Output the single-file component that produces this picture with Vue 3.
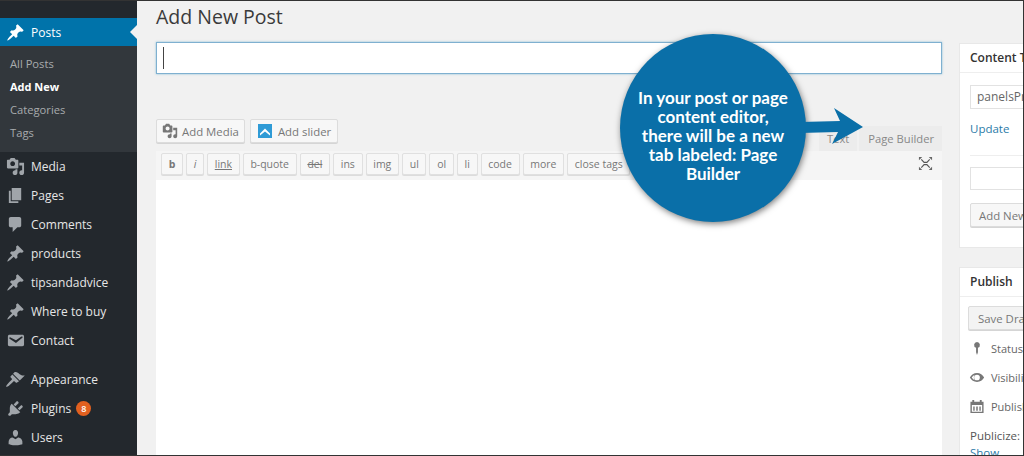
<script setup>
const subItems = [
  { label: 'All Posts' },
  { label: 'Add New', current: true },
  { label: 'Categories' },
  { label: 'Tags' },
]
const menuTop = [
  { label: 'Media', icon: 'media' },
  { label: 'Pages', icon: 'pages' },
  { label: 'Comments', icon: 'comment' },
  { label: 'products', icon: 'pin' },
  { label: 'tipsandadvice', icon: 'pin' },
  { label: 'Where to buy', icon: 'pin' },
  { label: 'Contact', icon: 'mail' },
]
const menuBottom = [
  { label: 'Appearance', icon: 'brush' },
  { label: 'Plugins', icon: 'plug', badge: '8' },
  { label: 'Users', icon: 'user' },
]
const quicktags = [
  { label: 'b', cls: 'bold' },
  { label: 'i', cls: 'ital' },
  { label: 'link', cls: 'under' },
  { label: 'b-quote' },
  { label: 'del', cls: 'strike' },
  { label: 'ins' },
  { label: 'img' },
  { label: 'ul' },
  { label: 'ol' },
  { label: 'li' },
  { label: 'code' },
  { label: 'more' },
  { label: 'close tags' },
]
const paths = {
  pin: 'M10.44 3.02l1.82-1.82 6.36 6.35-1.83 1.82c-1.05-.68-2.48-.57-3.41.36l-.75.75c-.92.93-1.04 2.35-.35 3.41l-1.83 1.82-2.41-2.41-2.8 2.79c-.42.42-3.38 2.71-3.8 2.29s1.86-3.39 2.28-3.81l2.79-2.79L4.1 9.36l1.83-1.82c1.05.69 2.48.57 3.4-.36l.75-.75c.93-.92 1.05-2.35.36-3.41z',
  media: 'M13 11V4c0-.55-.45-1-1-1h-1.67L9 1H5L3.67 3H2c-.55 0-1 .45-1 1v7c0 .55.45 1 1 1h10c.55 0 1-.45 1-1zM7 4.5c1.38 0 2.5 1.12 2.5 2.5S8.38 9.5 7 9.5 4.5 8.38 4.5 7 5.62 4.5 7 4.5zM14 6h5v10.5c0 1.38-1.12 2.5-2.5 2.5S14 17.88 14 16.5s1.12-2.5 2.5-2.5c.17 0 .34.02.5.05V9h-3V6zm-4 8.05V13h2v3.5c0 1.38-1.12 2.5-2.5 2.5S7 17.88 7 16.5 8.12 14 9.5 14c.17 0 .34.02.5.05z',
  pages: 'M6 15V2h10v13H6zm-1 1h8v2H3V5h2v11z',
  comment: 'M5 2h9c1.1 0 2 .9 2 2v7c0 1.1-.9 2-2 2h-2l-5 5v-5H5c-1.1 0-2-.9-2-2V4c0-1.1.9-2 2-2z',
  mail: 'M3.87 4h13.25C18.37 4 19 4.59 19 5.79v8.42c0 1.19-.63 1.79-1.88 1.79H3.87c-1.25 0-1.88-.6-1.88-1.79V5.79c0-1.2.63-1.79 1.88-1.79zm6.62 8.6l6.74-5.53c.24-.2.43-.66.13-1.07-.29-.41-.82-.42-1.17-.17l-5.7 3.86L4.8 6.83c-.35-.25-.88-.24-1.17.17-.3.41-.11.87.13 1.07z',
  brush: 'M14.48 11.06L7.41 3.99l1.5-1.5c.5-.56 2.3-.47 3.51.32 1.21.8 1.43 1.28 2.91 2.1 1.18.64 2.45 1.26 4.45.85zm-.71.71L6.7 4.7 4.93 6.47c-.39.39-.39 1.02 0 1.41l1.06 1.06c.39.39.39 1.03 0 1.42-.6.6-1.43 1.31-2.21 2.09-2.36 2.36-4.04 4.62-3.39 5.28.66.65 2.92-1.03 5.28-3.39.78-.78 1.49-1.61 2.09-2.21.39-.39 1.03-.39 1.42 0l1.06 1.06c.39.39 1.02.39 1.41 0z',
  plug: 'M13.11 4.36L9.87 7.6 8 5.73l3.24-3.24c.35-.34 1.05-.2 1.56.32.52.51.66 1.21.31 1.55zm-8 1.77l.91-1.12 9.01 9.01-1.19.84c-.71.71-2.63 1.16-3.82 1.16H6.14L4.9 17.26c-.59.59-1.54.59-2.12 0-.59-.58-.59-1.53 0-2.12l1.24-1.24v-3.88c0-1.13.4-3.05 1.09-3.89zm7.26 3.97l3.24-3.24c.34-.35 1.04-.21 1.55.31.52.51.66 1.21.31 1.55l-3.24 3.25z',
  user: 'M10 9.25c-2.27 0-2.73-3.44-2.73-3.44C7 4.02 7.82 2 9.97 2c2.16 0 2.98 2.02 2.71 3.81 0 0-.41 3.44-2.68 3.44zm0 2.57L12.72 10c2.39 0 4.52 2.33 4.52 4.53v2.49s-3.65 1.13-7.24 1.13c-3.65 0-7.24-1.13-7.24-1.13v-2.49c0-2.25 1.94-4.48 4.15-4.48z',
}
</script>

<template>
  <div class="screen">
    <aside class="sidebar">
      <div class="current-item">
        <svg class="menu-icon" viewBox="0 0 20 20"><path :d="paths.pin" /></svg>
        <span>Posts</span>
      </div>
      <ul class="submenu">
        <li v-for="item in subItems" :key="item.label" :class="{ active: item.current }">{{ item.label }}</li>
      </ul>
      <ul class="menu">
        <li v-for="item in menuTop" :key="item.label">
          <svg class="menu-icon" viewBox="0 0 20 20"><path :d="paths[item.icon]" fill-rule="evenodd" /></svg>
          <span>{{ item.label }}</span>
        </li>
      </ul>
      <ul class="menu second">
        <li v-for="item in menuBottom" :key="item.label">
          <svg class="menu-icon" viewBox="0 0 20 20"><path :d="paths[item.icon]" fill-rule="evenodd" /></svg>
          <span>{{ item.label }}</span>
          <b v-if="item.badge" class="badge">{{ item.badge }}</b>
        </li>
      </ul>
    </aside>

    <main class="content">
      <div class="editor-col">
        <h1>Add New Post</h1>
        <div class="title-input"><i class="caret"></i></div>
        <div class="media-row">
          <div class="media-buttons">
            <button class="btn media-btn">
              <svg class="btn-icon" viewBox="0 0 20 20"><path :d="paths.media" fill-rule="evenodd" /></svg>
              Add Media
            </button>
            <button class="btn slider-btn">
              <svg class="slider-icon" viewBox="0 0 14 14">
                <rect width="14" height="14" fill="#2f9bd6" />
                <path d="M2 9.5L7 4.5l5 5v2L7 7.5l-5 4z" fill="#fff" />
              </svg>
              Add slider
            </button>
          </div>
          <div class="tabs">
            <span class="tab">Text</span>
            <span class="tab active">Page Builder</span>
          </div>
        </div>
        <div class="toolbar">
          <span v-for="tag in quicktags" :key="tag.label" class="tag" :class="tag.cls">{{ tag.label }}</span>
          <svg class="expand" viewBox="0 0 16 16">
            <path class="expand-lines" d="M3.500 3.500L6.500 6.800H9.500L12.500 3.500M3.500 12.500L6.500 9.200H9.500L12.500 12.500" />
            <path d="M1 1h3.500L1 4.500zM15 1v3.500L11.500 1zM1 15v-3.500L4.500 15zM15 15h-3.500L15 11.500z" />
          </svg>
        </div>
        <div class="editor-area"></div>
      </div>

      <div class="side-col">
        <section class="panel tags-panel">
          <h2>Content T</h2>
          <div class="panel-body">
            <div class="field">panelsPr</div>
            <a class="update">Update</a>
            <hr />
            <div class="field empty"></div>
            <button class="btn add-new">Add New</button>
          </div>
        </section>
        <section class="panel publish-panel">
          <h2>Publish</h2>
          <div class="panel-body">
            <button class="btn save">Save Draft</button>
            <div class="meta">
              <svg viewBox="0 0 16 16"><path d="M8 1a3.200 3.200 0 0 1 1 6.200V12l-1 3-1-3V7.200A3.200 3.200 0 0 1 8 1z" /></svg>
              Status
            </div>
            <div class="meta">
              <svg viewBox="0 0 18 16"><path fill-rule="evenodd" d="M9 3c3.500 0 6.500 2.200 8 5-1.500 2.800-4.500 5-8 5s-6.500-2.200-8-5c1.500-2.800 4.500-5 8-5zM9 4.800a3.200 3.200 0 1 0 0 6.400 3.200 3.200 0 0 0 0-6.400zM3 8c1 1.400 2 2.400 3.200 3.100C5.200 9.400 5.200 6.600 6.200 4.900 5 5.600 4 6.600 3 8z" /></svg>
              Visibility
            </div>
            <div class="meta">
              <svg viewBox="0 0 16 16"><path fill-rule="evenodd" d="M1 3h2V1h2v2h6V1h2v2h2v12H1zM2.500 6.500v7h11v-7zM4 8h1.500v4.500H4zM7.200 8h1.600v4.500H7.200zM10.500 8H12v4.500h-1.500z" /></svg>
              Publish
            </div>
            <p class="publicize">Publicize: N</p>
            <a class="update show">Show</a>
          </div>
        </section>
      </div>

      <div class="callout">
        <svg class="arrow" viewBox="0 0 66 44">
          <path d="M0 18l40-1-6-13 29 19-31 17 6-12L0 29z" fill="#0a6fa8" />
        </svg>
        <div class="bubble">In your post or page<br />content editor,<br />there will be a new<br />tab labeled: Page<br />Builder</div>
      </div>
    </main>
  </div>
</template>

<style>
html, body { margin: 0; background: #f1f1f1; overflow: hidden; }
</style>

<style scoped>
.screen {
  width: 1024px;
  height: 456px;
  box-sizing: border-box;
  border-top: 1px solid #333;
  border-right: 1px solid #333;
  border-bottom: 1px solid #333;
  display: flex;
  overflow: hidden;
  font-family: "Open Sans", "Liberation Sans", sans-serif;
  font-size: 12px;
  color: #444;
  background: #f1f1f1;
}
.sidebar {
  width: 137px;
  flex: none;
  background: #23282d;
  color: #e6e6e6;
  padding-top: 17px;
  box-sizing: border-box;
}
.current-item {
  height: 28px;
  background: #0073aa;
  color: #fff;
  display: flex;
  align-items: center;
  position: relative;
}
.current-item::after {
  content: "";
  position: absolute;
  right: 0;
  top: 7px;
  border: 7px solid transparent;
  border-right-color: #f1f1f1;
  border-left-width: 0;
}
.menu-icon {
  width: 19px;
  height: 19px;
  margin: 0 6px 0 6px;
  fill: #a0a5aa;
  flex: none;
}
.current-item .menu-icon { fill: #fff; }
ul { list-style: none; margin: 0; padding: 0; }
.submenu {
  background: #32373c;
  height: 106px;
  box-sizing: border-box;
  padding-top: 6px;
  font-size: 11.2px;
  color: #a8abae;
}
.submenu li {
  height: 23px;
  line-height: 23px;
  padding-left: 10px;
}
.submenu .active { color: #fff; font-weight: 700; font-size: 11px; }
.menu li {
  height: 29px;
  display: flex;
  align-items: center;
}
.second { margin-top: 10px; }
.badge {
  margin-left: 5px;
  width: 15px;
  height: 15px;
  border-radius: 50%;
  background: #e2601f;
  color: #fff;
  font-size: 9px;
  font-weight: 600;
  line-height: 15px;
  text-align: center;
}
.content {
  flex: 1;
  min-width: 0;
  display: flex;
  padding-left: 19px;
  position: relative;
}
.editor-col {
  width: 786px;
  flex: none;
  display: flex;
  flex-direction: column;
}
h1 {
  margin: 0;
  height: 40px;
  padding-top: 1px;
  box-sizing: content-box;
  font-size: 19.5px;
  font-weight: 400;
  line-height: 30px;
  color: #3a3a3a;
}
.title-input {
  height: 32px;
  box-sizing: border-box;
  background: #fff;
  border: 1px solid #7fb0d0;
  box-shadow: 0 0 2px rgba(30, 140, 190, .5);
  padding: 4px 6px;
  display: flex;
}
.caret { width: 1px; height: 22px; background: #444; }
.media-row {
  margin-top: 45px;
  height: 32px;
  display: flex;
  justify-content: space-between;
}
.media-buttons { display: flex; gap: 5px; height: 24px; }
.btn {
  font: inherit;
  font-size: 11.4px;
  color: #777;
  background: #f7f7f7;
  border: 1px solid #dcdcdc;
  border-radius: 2px;
  box-shadow: 0 1px 0 #d5d5d5;
  height: 24px;
  display: flex;
  align-items: center;
}
.media-btn { padding: 0 5px; gap: 4px; }
.slider-btn { padding: 0 6px 0 7px; gap: 6px; }
.btn-icon { width: 16px; height: 16px; fill: #777; }
.slider-icon { width: 14px; height: 14px; }
.tabs {
  display: flex;
  align-items: flex-end;
  gap: 2px;
  padding-top: 6px;
  font-size: 11.2px;
}
.tab {
  height: 25px;
  line-height: 25px;
  padding: 0 8px;
  color: #888;
  background: #ececec;
}
.tab.active { padding: 0 8px 0 9px; }
.toolbar {
  height: 29px;
  box-sizing: border-box;
  background: #f5f5f5;
  display: flex;
  align-items: flex-start;
  gap: 3px;
  padding: 2px 5px 0;
  position: relative;
}
.tag {
  height: 22px;
  line-height: 20px;
  box-sizing: border-box;
  border: 1px solid #e0e0e0;
  border-radius: 2px;
  background: #f7f7f7;
  box-shadow: 0 1px 0 #dcdcdc;
  padding: 0 6.7px;
  font-size: 10.5px;
  color: #777;
}
.bold { font-weight: 700; }
.ital { font-style: italic; }
.under { text-decoration: underline; }
.strike { text-decoration: line-through; }
.expand {
  position: absolute;
  right: 9px;
  top: 5px;
  width: 15px;
  height: 15px;
  fill: #666;
}
.expand-lines { fill: none; stroke: #555; stroke-width: 1.2; }
.editor-area { flex: 1; background: #fff; }
.side-col {
  margin-left: 17px;
  flex: none;
  width: 280px;
  padding-top: 42px;
}
.panel {
  background: #fff;
  border: 1px solid #e8e8e8;
  margin-bottom: 19px;
}
.tags-panel { height: 205px; box-sizing: border-box; }
.publish-panel { height: 200px; box-sizing: border-box; }
h2 {
  margin: 0;
  height: 28px;
  line-height: 28px;
  padding-left: 10px;
  font-size: 12px;
  font-weight: 600;
  color: #333;
  border-bottom: 1px solid #eee;
}
.panel-body { padding: 12px 10px; }
.field {
  width: 200px;
  height: 24px;
  line-height: 22px;
  box-sizing: border-box;
  border: 1px solid #e2e2e2;
  padding-left: 6px;
  font-size: 12px;
  color: #666;
}
.update {
  display: block;
  margin-top: 12px;
  line-height: 16px;
  color: #2a7ba8;
  font-size: 11.5px;
}
hr {
  border: 0;
  border-top: 1px solid #eee;
  margin: 18px 0 11px;
}
.field.empty { height: 23px; }
.add-new { margin-top: 13px; width: 120px; padding-left: 8px; }
.publish-panel .panel-body { padding: 9px 10px; }
.save { width: 120px; margin-left: -2px; background: #f3f3f3; padding-left: 9px; }
.meta {
  display: flex;
  align-items: center;
  gap: 6px;
  height: 29px;
  font-size: 11px;
  color: #666;
}
.meta:first-of-type { margin-top: 4px; }
.meta svg { width: 16px; height: 15px; fill: #777; margin-left: -1px; }
.publicize { margin: 7px 0 0; font-size: 11.5px; line-height: 16px; color: #555; }
.show { margin-top: 1px; }
.callout {
  position: absolute;
  left: 483px;
  top: 33px;
}
.bubble {
  width: 186px;
  height: 188px;
  box-sizing: border-box;
  border-radius: 50%;
  background: #0a6fa8;
  box-shadow: 1px 2px 6px rgba(0, 0, 0, .5);
  color: #fff;
  font-family: "Lato", "Open Sans", sans-serif;
  font-weight: 700;
  font-size: 17px;
  line-height: 19px;
  text-align: center;
  padding-top: 54px;
  position: relative;
}
.arrow {
  position: absolute;
  left: 180px;
  top: 70px;
  width: 66px;
  height: 44px;
  z-index: 1;
}
</style>
